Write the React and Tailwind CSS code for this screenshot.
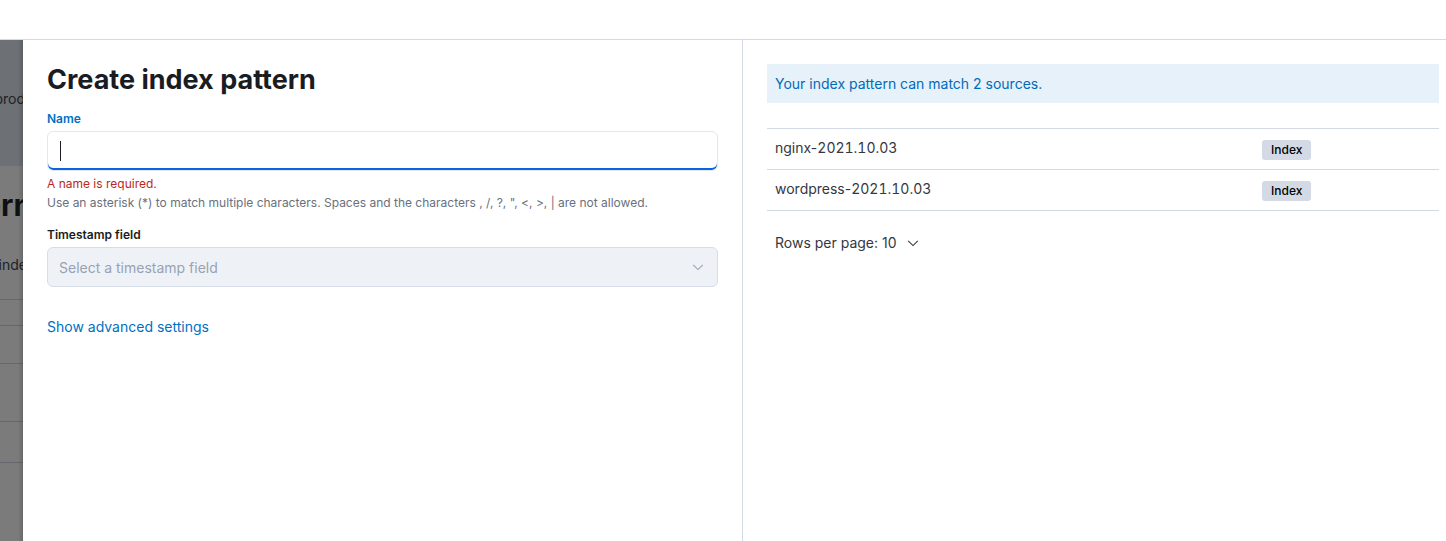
import React from "react";

const ChevronDown = ({ className }) => (
  <svg viewBox="0 0 16 16" className={className} fill="none" stroke="currentColor" strokeWidth="1.2">
    <path d="M2.5 5.5 8 11l5.5-5.5" />
  </svg>
);

const BackgroundStrip = () => (
  <div className="relative w-[23px] shrink-0 overflow-hidden bg-[#7b7b7b]">
    <div className="h-[126px] bg-[#6d7074] flex flex-col justify-start">
      <div className="mt-[49px] flex justify-end whitespace-nowrap text-[14px] leading-[20px] text-[#1f2125] -mr-[2px]">
        prod
      </div>
    </div>
    <div className="mt-[21px] flex justify-end whitespace-nowrap text-[30px] font-bold leading-[36px] text-[#0f1012] -mr-[26px]">
      Index patterns
    </div>
    <div className="mt-[32px] flex justify-end whitespace-nowrap text-[14px] leading-[20px] text-[#1f2125] -mr-[4px]">
      Create an inde
    </div>
    <div className="mt-[24px] border-t border-[#66676e]" />
    <div className="mt-[25px] border-t border-[#66676e]" />
    <div className="mt-[37px] border-t border-[#66676e]" />
    <div className="mt-[57px] border-t border-[#66676e]" />
    <div className="mt-[40px] border-t border-[#66676e]" />
    <div className="absolute inset-y-0 right-0 w-[5px] bg-gradient-to-r from-transparent to-black/15" />
  </div>
);

const CreateForm = () => (
  <div className="w-[720px] shrink-0 border-r border-[#d3dae6] px-[24px] pt-[20px]">
    <h1 className="text-[27px] font-bold leading-[40px] text-[#1a1c21]">
      Create index pattern
    </h1>
    <label className="mt-[11px] block text-[12px] font-semibold leading-[16px] text-[#0071c2]">Name</label>
    <div className="mt-[4px] flex h-[40px] items-center rounded-[6px] border border-[#e4e7f0] bg-white shadow-[inset_0_-2px_0_#0b64dd] pl-[12px]">
      <span className="h-[20px] w-px bg-[#1a1c21]" />
    </div>
    <p className="mt-[5px] text-[12px] leading-[16px] text-[#bd271e]">A name is required.</p>
    <p className="mt-[3px] text-[12px] leading-[16px] text-[#69707d]">
      Use an asterisk (*) to match multiple characters. Spaces and the characters , /, ?, ", &lt;, &gt;, | are not allowed.
    </p>
    <label className="mt-[16px] block text-[12px] font-semibold leading-[16px] text-[#1a1c21]">Timestamp field</label>
    <div className="mt-[4px] flex h-[40px] items-center justify-between rounded-[6px] border border-[#d6dce8] bg-[#eef2f7] pl-[11px] pr-[12px]">
      <span className="text-[14px] text-[#98a2b3]">Select a timestamp field</span>
      <ChevronDown className="h-[14px] w-[14px] text-[#98a2b3]" />
    </div>
    <button className="mt-[30px] block text-[14px] leading-[20px] text-[#0071c2]">Show advanced settings</button>
  </div>
);

const sources = [
  { name: "nginx-", date: "2021.10.03" },
  { name: "wordpress-", date: "2021.10.03" },
];

const SourcesPanel = () => (
  <div className="flex-1 pl-[24px] pr-[7px] pt-[24px]">
    <div className="flex h-[39px] items-center bg-[#e6f1fa] px-[8px] text-[14px] text-[#006bb8]">
      Your index pattern can match 2 sources.
    </div>
    <div className="mt-[25px] border-t border-[#d3dae6]">
      {sources.map((s) => (
        <div key={s.name} className="grid h-[41px] grid-cols-[487px_1fr] items-start pt-[9px] border-b border-[#d3dae6] text-[14px] leading-[20px] text-[#343741]">
          <span className="px-[8px]">
            {s.name}
            <span className="tabular-nums">{s.date}</span>
          </span>
          <span className="px-[8px]">
            <span className="mt-[2px] inline-flex h-[20px] items-center rounded-[3px] bg-[#d3dae6] px-[9px] text-[12px] font-medium text-[#000000]">
              Index
            </span>
          </span>
        </div>
      ))}
    </div>
    <div className="mt-[22px] flex items-center gap-[9px] px-[8px] text-[14px] leading-[20px] text-[#343741]">
      <span>Rows per page: 10</span>
      <ChevronDown className="h-[14px] w-[14px] text-[#343741]" />
    </div>
  </div>
);

export default function App() {
  return (
    <div className="flex h-[541px] w-full flex-col overflow-hidden bg-white font-['Inter',sans-serif]">
      <div className="h-[40px] shrink-0 border-b border-[#d3dae6] bg-white" />
      <div className="flex flex-1">
        <BackgroundStrip />
        <CreateForm />
        <SourcesPanel />
      </div>
    </div>
  );
}
